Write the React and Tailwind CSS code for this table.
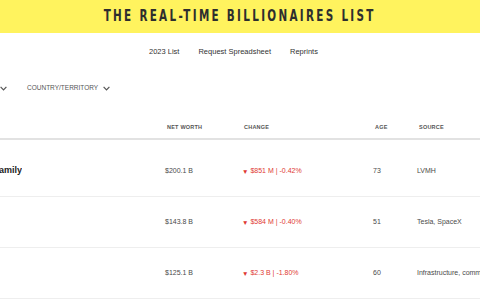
import React from "react";

const rows = [
  { name: "Bernard Arnault & family", worth: "$200.1 B", change: "$851 M | -0.42%", age: "73", source: "LVMH", first: true },
  { name: "Elon Musk", worth: "$143.8 B", change: "$584 M | -0.40%", age: "51", source: "Tesla, SpaceX" },
  { name: "Gautam Adani & family", worth: "$125.1 B", change: "$2.3 B | -1.80%", age: "60", source: "Infrastructure, commodities" },
];

function Chevron() {
  return (
    <svg width="7" height="5" viewBox="0 0 7 5" className="shrink-0">
      <path d="M0.6 0.8 L3.5 3.8 L6.4 0.8" fill="none" stroke="#555" strokeWidth="1.2" />
    </svg>
  );
}

export default function App() {
  return (
    <div className="w-[480px] h-[300px] overflow-hidden bg-white" style={{ fontFamily: "'Liberation Sans', Arial, sans-serif" }}>
      <div className="h-[33px] bg-[#fff35e] flex items-center justify-center">
        <h1
          className="text-[15px] font-bold tracking-[0.2em] text-[#2e2e2e] leading-none whitespace-nowrap scale-x-[0.77]"
          style={{ fontFamily: "'DejaVu Sans Condensed', 'Liberation Sans', sans-serif" }}
        >
          THE REAL-TIME BILLIONAIRES LIST
        </h1>
      </div>

      <nav className="h-[37px] flex items-center pl-[149px] gap-[19px] text-[7.5px] text-[#333]">
        <span>2023 List</span>
        <span>Request Spreadsheet</span>
        <span>Reprints</span>
      </nav>

      <div className="h-[34px] flex items-center pt-[2px] text-[6.5px] text-[#555] uppercase">
        <Chevron />
        <span className="ml-[20px]">Country/Territory</span>
        <span className="ml-[5px]"><Chevron /></span>
      </div>

      <div className="h-[36px] flex items-start pt-[19px] border-b-[2px] border-[#e2e2e2] text-[5.5px] font-bold tracking-[0.04em] text-[#555] uppercase">
        <div className="w-[167px] shrink-0" />
        <div className="w-[77px] shrink-0">Net Worth</div>
        <div className="w-[131px] shrink-0">Change</div>
        <div className="w-[44px] shrink-0">Age</div>
        <div>Source</div>
      </div>

      <div className="mt-[6px]">
        {rows.map((r) => (
          <div key={r.name} className="h-[51px] flex items-center border-b border-[#eeeeee] text-[7px] text-[#4a4a4a] whitespace-nowrap">
            <div className="w-[165px] shrink-0 flex">
              <div className="w-[22px] overflow-hidden flex justify-end">
                {r.first && <span className="text-[9px] font-bold text-[#222] shrink-0">{r.name}</span>}
              </div>
            </div>
            <div className="w-[77px] shrink-0">{r.worth}</div>
            <div className="w-[131px] shrink-0 flex items-center text-[#e03a32]">
              <span className="text-[6.5px] mr-[2px] pt-[1px]">▼</span>
              {r.change}
            </div>
            <div className="w-[44px] shrink-0">{r.age}</div>
            <div>{r.source}</div>
          </div>
        ))}
      </div>
    </div>
  );
}
